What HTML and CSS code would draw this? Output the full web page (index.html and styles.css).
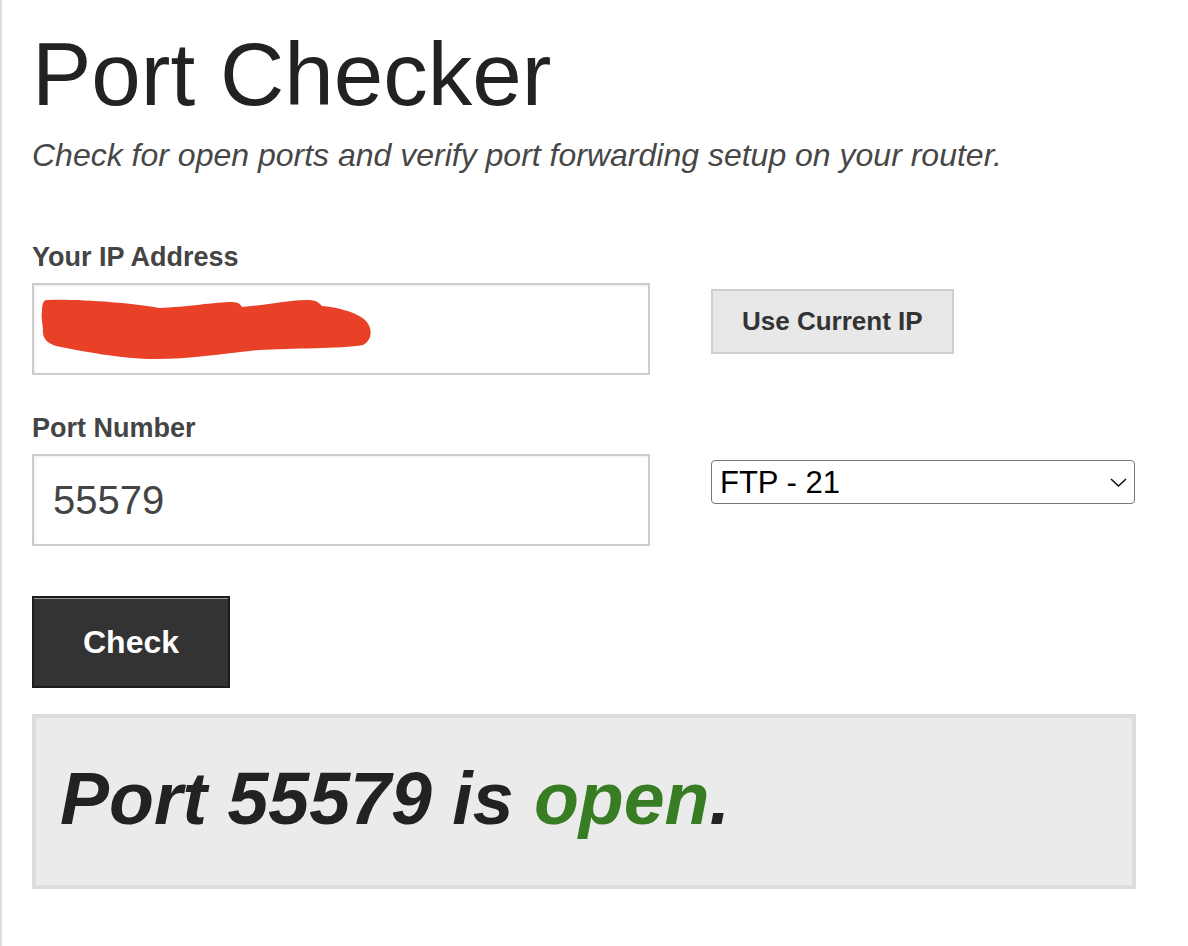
FILE: index.html
```html
<!DOCTYPE html>
<html lang="en">
<head>
<meta charset="utf-8">
<title>Port Checker</title>
<link rel="stylesheet" href="styles.css">
</head>
<body>
<div class="page">
  <h1 class="title">Port Checker</h1>
  <p class="subtitle">Check for open ports and verify port forwarding setup on your router.</p>

  <form class="form">
    <div class="field-group">
      <label class="label" for="ip">Your IP Address</label>
      <div class="input-wrap">
        <input class="text-input" id="ip" type="text" value="">
        <svg class="redact" width="334" height="62" viewBox="0 0 334 62" aria-hidden="true">
          <path fill="#e84128" d="M6 1 C40 0 90 4 118 9 C145 8 175 3 191 3 C198 3 200 6 201 8 C225 6 255 0 268 1 C276 1 279 5 281 7 C300 9 312 13 320 18 C332 25 333 40 322 46 C300 50 250 49 218 51 C180 55 150 60 115 60 C80 60 40 52 15 47 C5 44 1 38 2 30 C1 22 0 16 1 12 C1 4 3 1 6 1 Z"/>
        </svg>
      </div>
      <div class="side">
        <button type="button" class="btn-secondary">Use Current IP</button>
      </div>
    </div>

    <div class="field-group field-group-port">
      <label class="label" for="port">Port Number</label>
      <div class="input-wrap">
        <input class="text-input" id="port" type="text" value="55579">
      </div>
      <div class="side">
        <div class="select-wrap">
          <select class="select">
            <option>FTP - 21</option>
            <option>SSH - 22</option>
            <option>HTTP - 80</option>
          </select>
          <svg class="chevron" width="17" height="9" viewBox="0 0 17 9" aria-hidden="true">
            <path d="M1 1 L8.5 8 L16 1" fill="none" stroke="#111" stroke-width="1.5"/>
          </svg>
        </div>
      </div>
    </div>

    <button type="button" class="btn-primary">Check</button>
  </form>

  <div class="result">
    <p class="result-text">Port 55579 is <span class="open">open</span>.</p>
  </div>
</div>
</body>
</html>
```

FILE: styles.css
```css
* {
  box-sizing: border-box;
}

html, body {
  margin: 0;
  padding: 0;
  background: #ffffff;
}

body {
  font-family: "Liberation Sans", Arial, sans-serif;
  border-left: 2px solid #dedede;
  min-height: 100vh;
}

.page {
  padding: 30px 0 0 30px;
  width: 1136px;
}

.title {
  margin: 0;
  font-size: 89px;
  line-height: 88px;
  font-weight: normal;
  color: #222222;
}

.subtitle {
  margin: 21px 0 0;
  font-size: 32px;
  line-height: 32px;
  font-style: italic;
  color: #474747;
}

.form {
  margin-top: 73px;
  display: flex;
  flex-direction: column;
  align-items: flex-start;
}

.field-group {
  display: grid;
  grid-template-columns: 618px 424px;
  column-gap: 61px;
  row-gap: 12px;
}

.field-group-port {
  margin-top: 40px;
}

.label {
  grid-column: 1;
  font-size: 27px;
  line-height: 27px;
  font-weight: bold;
  color: #444444;
}

.input-wrap {
  grid-column: 1;
  position: relative;
}

.text-input {
  display: block;
  width: 618px;
  height: 92px;
  border: 2px solid #cccccc;
  box-shadow: inset 1px 1px 3px rgba(0, 0, 0, 0.08);
  padding: 0 19px;
  font-family: "Liberation Sans", Arial, sans-serif;
  font-size: 40px;
  color: #444444;
  background: #ffffff;
  outline: none;
}

.redact {
  position: absolute;
  left: 9px;
  top: 16px;
}

.side {
  grid-column: 2;
  grid-row: 2;
  align-self: start;
  margin-top: 6px;
}

.btn-secondary {
  display: block;
  height: 65px;
  padding: 0 29px;
  background: #e8e8e8;
  border: 2px solid #cfcfcf;
  font-family: "Liberation Sans", Arial, sans-serif;
  font-size: 26px;
  font-weight: bold;
  color: #333333;
}

.select-wrap {
  position: relative;
  width: 424px;
}

.select {
  display: block;
  width: 100%;
  height: 44px;
  -webkit-appearance: none;
  appearance: none;
  border: 1px solid #767676;
  border-radius: 4px;
  background: #ffffff;
  padding: 0 30px 0 8px;
  font-family: "Liberation Sans", Arial, sans-serif;
  font-size: 31px;
  color: #000000;
}

.chevron {
  position: absolute;
  right: 8px;
  top: 18px;
  pointer-events: none;
}

.btn-primary {
  margin-top: 50px;
  width: 198px;
  height: 92px;
  background: #333333;
  border: 2px solid #1c1c1c;
  box-shadow: inset 0 1px 0 #9a9a9a;
  font-family: "Liberation Sans", Arial, sans-serif;
  font-size: 32px;
  font-weight: bold;
  color: #ffffff;
}

.result {
  margin-top: 26px;
  width: 1104px;
  height: 175px;
  background: #ebebeb;
  border: 4px solid #dcdcdc;
  padding: 44px 24px 0;
}

.result-text {
  margin: 0;
  font-size: 73.5px;
  line-height: 73px;
  font-weight: bold;
  font-style: italic;
  color: #222222;
}

.open {
  color: #387d24;
}
```
